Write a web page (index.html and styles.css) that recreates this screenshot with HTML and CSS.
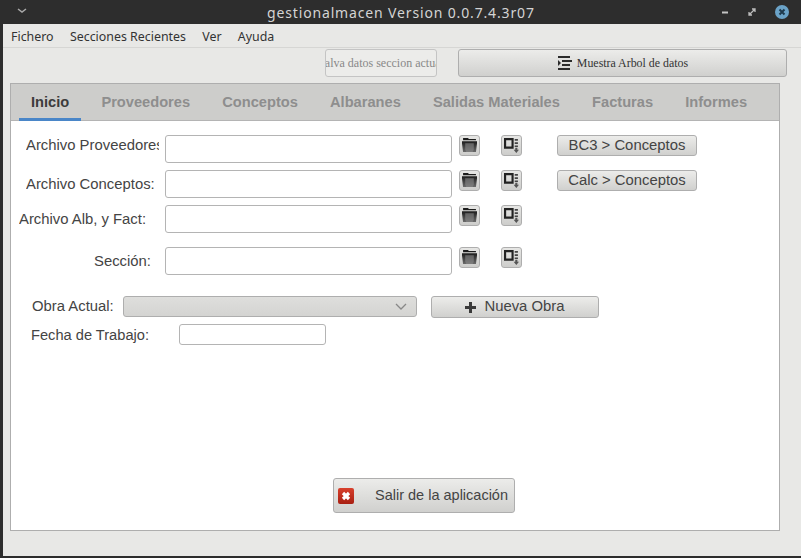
FILE: index.html
```html
<!DOCTYPE html>
<html lang="es">
<head>
    <meta charset="UTF-8">
    <title>gestionalmacen Version 0.0.7.4.3r07</title>
    <link rel="stylesheet" href="styles.css">
</head>
<body>
    <svg class="defs" width="0" height="0">
        <defs>
            <linearGradient id="dark" x1="0" y1="0" x2="0" y2="1">
                <stop offset="0" stop-color="#1c1c1c"/>
                <stop offset="1" stop-color="#6a6a6a"/>
            </linearGradient>
            <linearGradient id="red" x1="0" y1="0" x2="0" y2="1">
                <stop offset="0" stop-color="#d8402c"/>
                <stop offset="1" stop-color="#a81f12"/>
            </linearGradient>
            <symbol id="open" viewBox="0 0 14 14">
                <path d="M1 0h5v1h7v1H1z" fill="#1c1c1c"/>
                <path d="M0 3h14v2l-1 8H1L0 5z" fill="url(#dark)"/>
                <path d="M3 5h8v6l-1 2H4l-1-2z" fill="#8a8a8a" opacity=".6"/>
            </symbol>
            <symbol id="save" viewBox="0 0 14 14">
                <path d="M0 0h9v10H0zM2 2v6h5V2z" fill="#222" fill-rule="evenodd"/>
                <path d="M10 1h3v1.500h-3zM10 4h3v1.500h-3zM10 7h3v1.500h-3z" fill="#444"/>
                <path d="M10.500 9h2v2H14l-2.500 3L9 11h1.500z" fill="#555"/>
            </symbol>
        </defs>
    </svg>

    <header class="titlebar">
        <svg class="win-menu" width="10" height="5" viewBox="0 0 10 5"><path d="M1 1l4 3 4-3" fill="none" stroke="#aaa" stroke-width="1.500"/></svg>
        <span class="win-title">gestionalmacen Version 0.0.7.4.3r07</span>
        <div class="win-controls">
            <svg width="8" height="3" viewBox="0 0 8 3"><path d="M1 1.500h6" stroke="#c4c4c4" stroke-width="2"/></svg>
            <svg width="8" height="8" viewBox="0 0 8 8"><path d="M1 7l6-6M4 1h3v3M1 4v3h3" fill="none" stroke="#bdbdbd" stroke-width="1.300"/></svg>
            <span class="win-close"><svg width="8" height="8" viewBox="0 0 8 8"><path d="M1.500 1.500l5 5m0-5l-5 5" stroke="#1f3a4d" stroke-width="2"/></svg></span>
        </div>
    </header>

    <div class="window">
        <nav class="menubar">
            <span>Fichero</span>
            <span>Secciones Recientes</span>
            <span>Ver</span>
            <span>Ayuda</span>
        </nav>

        <div class="toolbar">
            <div class="save-box"><span>Salva datos seccion actual</span></div>
            <button class="btn tree-btn">
                <svg width="16" height="14" viewBox="0 0 16 14"><path d="M1 0h12v2H1zM5 4h10v2H5zM5 8h8v2H5zM1 12h12v2H1z" fill="#2b2b2b"/><path d="M1 4l3 3-3 3z" fill="#2b2b2b"/></svg>
                Muestra Arbol de datos
            </button>
        </div>

        <section class="tabs">
            <div class="tab-head">
                <span class="tab active">Inicio</span>
                <span class="tab">Proveedores</span>
                <span class="tab">Conceptos</span>
                <span class="tab">Albaranes</span>
                <span class="tab">Salidas Materiales</span>
                <span class="tab">Facturas</span>
                <span class="tab">Informes</span>
            </div>

            <div class="tab-body">
                <div class="file-row first-row">
                    <label class="file-label from-26">Archivo Proveedores:</label>
                    <input class="field file-input" type="text">
                    <button class="btn icon-btn"><svg width="15" height="15"><use href="#open"/></svg></button>
                    <button class="btn icon-btn"><svg width="15" height="15"><use href="#save"/></svg></button>
                    <button class="btn action-btn"><span>BC3 &gt; Conceptos</span></button>
                </div>
                <div class="file-row">
                    <label class="file-label from-26">Archivo Conceptos:</label>
                    <input class="field file-input" type="text">
                    <button class="btn icon-btn"><svg width="15" height="15"><use href="#open"/></svg></button>
                    <button class="btn icon-btn"><svg width="15" height="15"><use href="#save"/></svg></button>
                    <button class="btn action-btn"><span>Calc &gt; Conceptos</span></button>
                </div>
                <div class="file-row">
                    <label class="file-label from-19">Archivo Alb, y Fact:</label>
                    <input class="field file-input" type="text">
                    <button class="btn icon-btn"><svg width="15" height="15"><use href="#open"/></svg></button>
                    <button class="btn icon-btn"><svg width="15" height="15"><use href="#save"/></svg></button>
                </div>
                <div class="file-row section-row">
                    <label class="file-label from-94">Sección:</label>
                    <input class="field file-input" type="text">
                    <button class="btn icon-btn"><svg width="15" height="15"><use href="#open"/></svg></button>
                    <button class="btn icon-btn"><svg width="15" height="15"><use href="#save"/></svg></button>
                </div>

                <div class="obra-row">
                    <label class="obra-label">Obra Actual:</label>
                    <div class="combo">
                        <svg width="12" height="7" viewBox="0 0 12 7"><path d="M1 1l5 5 5-5" fill="none" stroke="#888" stroke-width="1.300"/></svg>
                    </div>
                    <button class="btn nueva-btn">
                        <svg width="11" height="11" viewBox="0 0 11 11"><path d="M4 0h3v4h4v3H7v4H4V7H0V4h4z" fill="#3a3a3a"/></svg>
                        <span>Nueva Obra</span>
                    </button>
                </div>
                <div class="fecha-row">
                    <label class="fecha-label">Fecha de Trabajo:</label>
                    <input class="field fecha-input" type="text">
                </div>

                <div class="exit-row">
                    <button class="btn exit-btn">
                        <svg width="16" height="16" viewBox="0 0 16 16"><rect width="16" height="16" rx="2" fill="url(#red)"/><path d="M5 5l6 6m0-6l-6 6" stroke="#fff" stroke-width="3.200"/></svg>
                        <span>Salir de la aplicación</span>
                    </button>
                </div>
            </div>
        </section>
    </div>
</body>
</html>
```

FILE: styles.css
```css
* {
    box-sizing: border-box;
}
html, body {
    margin: 0;
    padding: 0;
}
body {
    width: 801px;
    height: 558px;
    overflow: hidden;
    background: #2d2d2d;
    font-family: "Liberation Sans", Arial, sans-serif;
    color: #444;
}
.defs {
    display: block;
    height: 0;
}
.titlebar {
    height: 24px;
    background: #2d2d2d;
    display: flex;
    align-items: center;
    position: relative;
}
.win-menu {
    margin-left: 17px;
    margin-top: -4px;
}
.win-title {
    position: absolute;
    left: 267px;
    top: 4px;
    font-family: "Noto Sans", sans-serif;
    font-size: 14px;
    letter-spacing: 0.85px;
    line-height: 18px;
    color: #d4d4d4;
    white-space: nowrap;
}
.win-controls {
    margin-left: auto;
    display: flex;
    align-items: center;
    gap: 19px;
    padding-right: 12px;
}
.win-close {
    width: 14px;
    height: 14px;
    border-radius: 50%;
    background: #6ba3c8;
    display: flex;
    align-items: center;
    justify-content: center;
}
.window {
    height: 532px;
    margin-left: 3px;
    background: #e8e8e6;
    display: flex;
    flex-direction: column;
}
.menubar {
    height: 24px;
    flex: none;
    padding: 1px 0 0 8px;
    border-bottom: 1px solid #d6d6d4;
    display: flex;
    align-items: center;
    gap: 16.300px;
    font-family: "Noto Sans", sans-serif;
    font-size: 12.400px;
    color: #333;
}
.toolbar {
    height: 35px;
    flex: none;
    padding: 1px 14px 0 322px;
    display: flex;
    align-items: flex-start;
    gap: 21px;
}
.save-box {
    width: 112px;
    height: 28px;
    background: #ececea;
    border: 1px solid #c4c4c4;
    border-radius: 3px;
    overflow: hidden;
    font-family: "Liberation Serif", serif;
    font-size: 12px;
    line-height: 26px;
    color: #888;
    white-space: nowrap;
    display: flex;
    justify-content: center;
}
.btn {
    background: linear-gradient(#ececea, #d0d0ce);
    border: 1px solid #aeaeae;
    border-radius: 3px;
    padding: 0;
    font-family: "Liberation Sans", Arial, sans-serif;
    color: #444;
    display: flex;
    align-items: center;
    justify-content: center;
    flex: none;
}
.tree-btn {
    width: 329px;
    height: 28px;
    gap: 4px;
    font-family: "Liberation Serif", serif;
    font-size: 11.900px;
    color: #333;
}
.tabs {
    flex: 1;
    margin: 0 21px 25px 7px;
    border: 1px solid #aeaeae;
    display: flex;
    flex-direction: column;
    background: #fff;
    min-height: 0;
}
.tab-head {
    height: 37px;
    flex: none;
    background: #cdcdcb;
    border-bottom: 1px solid #b4b4b4;
    display: flex;
    padding-left: 8px;
    gap: 8.150px;
}
.tab {
    padding: 0 12px;
    height: 37px;
    line-height: 36px;
    font-size: 14.650px;
    font-weight: bold;
    color: #8e8e8e;
    white-space: nowrap;
}
.tab.active {
    color: #3c3c3c;
    border-bottom: 3px solid #4a86c8;
}
.tab-body {
    flex: 1;
    padding-top: 14px;
    display: flex;
    flex-direction: column;
}
.file-row {
    height: 28px;
    margin-bottom: 7px;
    display: flex;
    align-items: flex-start;
    padding-left: 154px;
    position: relative;
}
.section-row {
    margin-top: 7px;
}
.file-label {
    position: absolute;
    top: 6px;
    font-size: 14.850px;
    line-height: 17px;
    white-space: nowrap;
    overflow: hidden;
}
.first-row .file-label {
    top: 2px;
}
.from-26 {
    left: 15px;
    width: 133px;
}
.from-19 {
    left: 8px;
}
.from-94 {
    left: 83px;
}
.field {
    background: #fff;
    border: 1px solid #b4b4b4;
    border-radius: 3px;
    padding: 0 4px;
    outline: none;
}
.file-input {
    width: 287px;
    height: 28px;
    margin-right: 7px;
}
.icon-btn {
    width: 21px;
    height: 21px;
    margin-right: 21px;
    background: linear-gradient(#e6e6e4, #cdcdcb);
}
.action-btn {
    width: 140px;
    height: 21px;
    margin-left: 14px;
    font-size: 14.850px;
}
.action-btn span,
.nueva-btn span,
.exit-btn span {
    margin-bottom: 2px;
}
.obra-row {
    margin-top: 14px;
    height: 22px;
    display: flex;
    align-items: flex-start;
    padding-left: 21px;
}
.obra-label {
    width: 91px;
    font-size: 14.850px;
    line-height: 20px;
    white-space: nowrap;
}
.combo {
    width: 294px;
    height: 21px;
    background: linear-gradient(#dededc, #d4d4d2);
    border: 1px solid #aeaeae;
    border-radius: 3px;
    display: flex;
    align-items: center;
    justify-content: flex-end;
    padding-right: 9px;
}
.nueva-btn {
    width: 168px;
    height: 22px;
    margin-left: 14px;
    gap: 8px;
    font-size: 14.850px;
}
.fecha-row {
    margin-top: 6px;
    height: 21px;
    display: flex;
    align-items: center;
    padding-left: 20px;
}
.fecha-label {
    width: 148px;
    font-size: 14.650px;
    white-space: nowrap;
}
.fecha-input {
    width: 147px;
    height: 21px;
}
.exit-row {
    margin-top: auto;
    padding: 0 0 17px 322px;
}
.exit-btn {
    width: 182px;
    height: 35px;
    justify-content: flex-start;
    padding-left: 4px;
    font-size: 14.500px;
}
.exit-btn span {
    margin-left: 21px;
}
```
